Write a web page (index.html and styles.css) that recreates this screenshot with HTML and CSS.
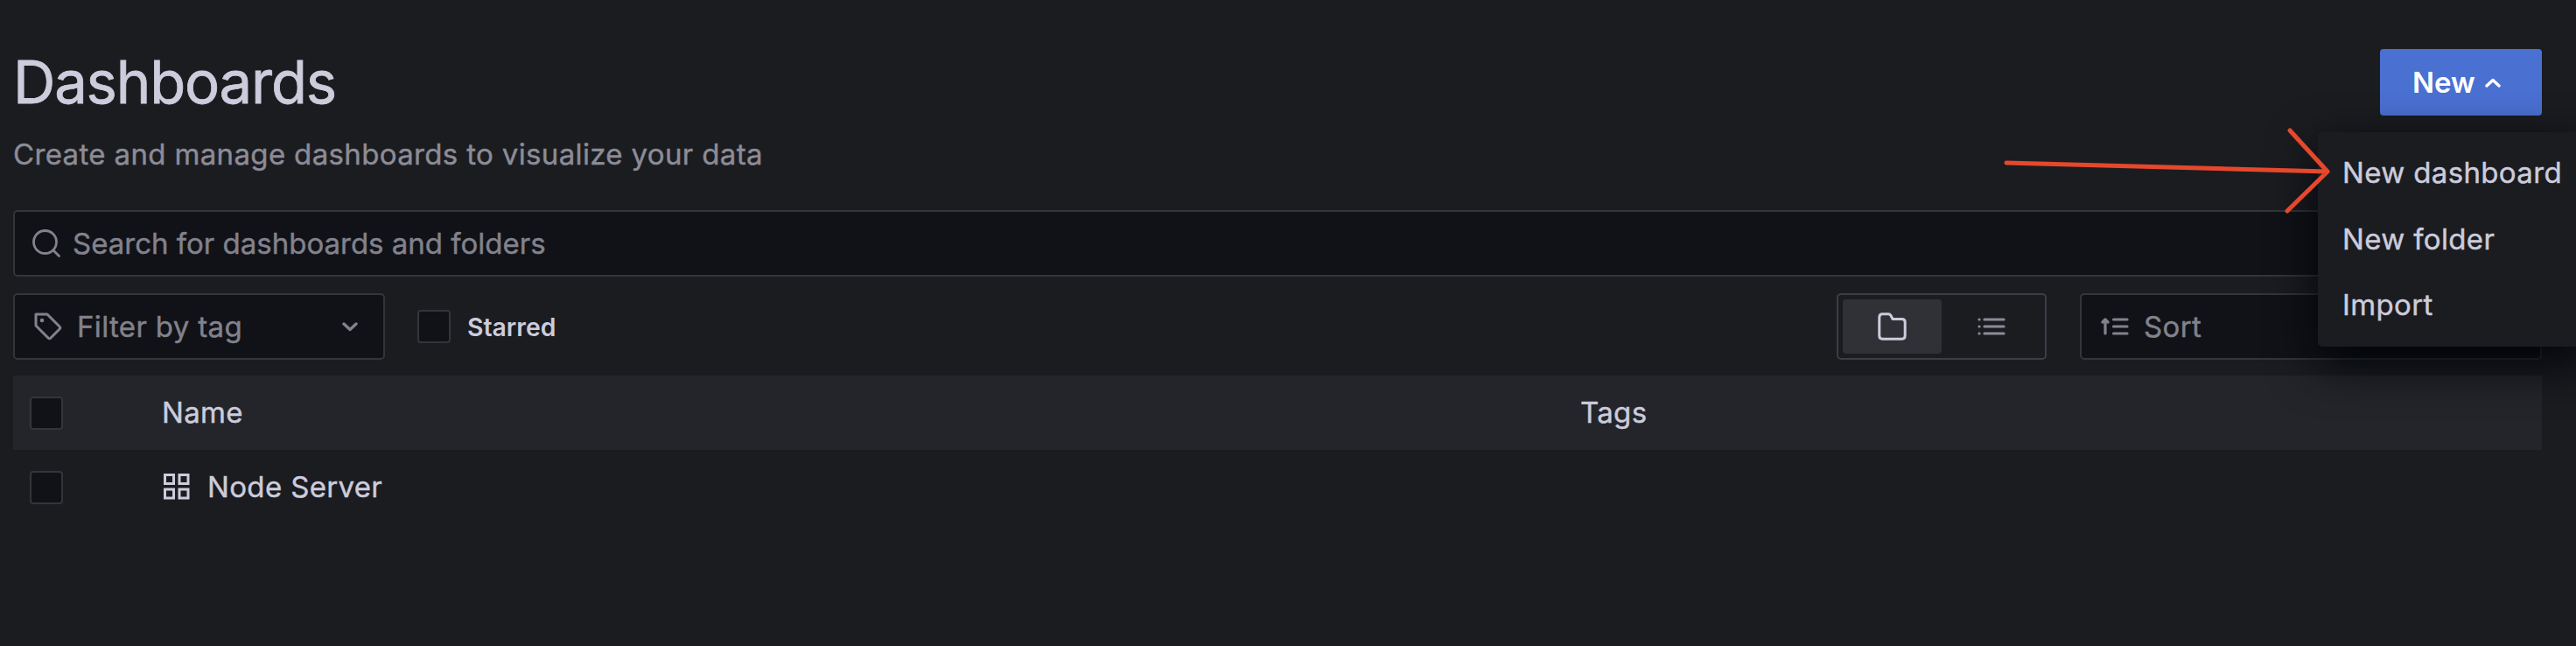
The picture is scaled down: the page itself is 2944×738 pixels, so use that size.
FILE: index.html
```html
<!DOCTYPE html>
<html lang="en">
<head>
<meta charset="utf-8">
<title>Dashboards</title>
<link rel="stylesheet" href="styles.css">
</head>
<body>
<main class="page">
  <header class="page-header">
    <div class="heading">
      <h1 class="title">Dashboards</h1>
      <p class="subtitle">Create and manage dashboards to visualize your data</p>
    </div>
    <button class="new-button"><span>New</span>
      <svg class="caret" viewBox="0 0 18 11"><path d="M2 9 L9 2.5 L16 9"/></svg>
    </button>
  </header>

  <div class="search field">
    <svg class="icon-search" viewBox="0 0 32 32"><circle cx="14.500" cy="14.500" r="13"/><path d="M24 24 L30.500 30.500"/></svg>
    <span class="placeholder">Search for dashboards and folders</span>
  </div>

  <div class="filters">
    <div class="tag-filter field">
      <svg class="icon-tag" viewBox="0 0 32 32"><path d="M2 2 H15 L29 16 Q30.5 17.500 29 19 L19 29 Q17.500 30.500 16 29 L2 15 Z"/><circle cx="9" cy="9" r="2.300"/></svg>
      <span class="placeholder">Filter by tag</span>
      <svg class="caret chevron" viewBox="0 0 18 11"><path d="M2 2 L9 8.500 L16 2"/></svg>
    </div>
    <label class="starred"><span class="checkbox"></span><span class="starred-text">Starred</span></label>
    <div class="view-toggle">
      <div class="toggle active">
        <svg class="icon-folder" viewBox="0 0 33 32"><path d="M5.500 1.800 H12 Q14 1.800 15 3.500 L17 7.500 H27.500 Q31.200 7.500 31.200 11 V26.500 Q31.200 30.200 27.500 30.200 H5.500 Q1.800 30.200 1.800 26.500 V5.500 Q1.800 1.800 5.500 1.800 Z"/></svg>
      </div>
      <div class="toggle">
        <svg class="icon-lines" viewBox="0 0 32 22"><path d="M8 3 H30 M8 11 H30 M8 19 H30 M2 3 h.01 M2 11 h.01 M2 19 h.01"/></svg>
      </div>
    </div>
    <div class="sort field">
      <svg class="icon-lines" viewBox="0 0 32 22"><path d="M14.500 3 H30 M14.500 11 H30 M14.500 19 H30 M5 19 V3 M2 6 L5 3 L8 6"/></svg>
      <span class="placeholder">Sort</span>
    </div>
  </div>

  <section class="table">
    <div class="row head"><span class="checkbox"></span><span class="name">Name</span><span class="tags">Tags</span></div>
    <div class="row"><span class="checkbox"></span>
      <span class="name"><svg class="icon-apps" viewBox="0 0 30 30"><path d="M1.500 1.500 H11.500 V11.500 H1.500 Z M18 1.500 H28 V11.500 H18 Z M1.500 18 H11.500 V28 H1.500 Z M18 18 H28 V28 H18 Z"/></svg>Node Server</span>
    </div>
  </section>
</main>

<nav class="menu">
  <a class="menu-item">New dashboard</a>
  <a class="menu-item">New folder</a>
  <a class="menu-item">Import</a>
</nav>
<svg class="arrow" viewBox="0 0 380 104"><path d="M7 42 L374 52 M331 5 L374 52 L328 97"/></svg>
</body>
</html>
```
FILE: styles.css
```css
* { box-sizing: border-box; }
body {
  margin: 0;
  height: 738px;
  overflow: hidden;
  position: relative;
  background: #1b1c20;
  color: #ccccdc;
  font: 400 33px/52px Inter, "Liberation Sans", sans-serif;
  letter-spacing: 0.350px;
  -webkit-text-stroke: 0.400px currentColor;
}
svg { display: block; flex: none; fill: none; stroke-linecap: round; stroke-linejoin: round; }
.page { padding: 56px 39px 0 15px; }
.page-header { display: flex; justify-content: space-between; align-items: flex-start; height: 184px; }
.title { margin: 0; font-size: 67px; font-weight: 400; line-height: 76px; letter-spacing: -1.200px; -webkit-text-stroke-width: 0.800px; }
.subtitle { margin: 18px 0 0; color: #8c8c97; }
.new-button {
  display: flex; align-items: center; gap: 11px;
  width: 185px; height: 76px; padding: 0 0 0 37px;
  border: 0; border-radius: 4px;
  background: #4a70d2; color: #fff;
  font: 600 33px/52px Inter, "Liberation Sans", sans-serif;
  -webkit-text-stroke-width: 0;
}
.caret { width: 18px; height: 11px; stroke: currentColor; stroke-width: 3.400; }
.field {
  display: flex; align-items: center; height: 76px;
  background: #111217; border: 2px solid #34353b; border-radius: 5px;
  color: #82828d;
}
.search { padding-left: 20px; letter-spacing: 0; }
.icon-search { width: 32px; height: 32px; margin-right: 14px; stroke: currentColor; stroke-width: 2.800; }
.filters { display: flex; align-items: center; margin-top: 19px; }
.tag-filter { width: 425px; padding: 0 29px 0 22px; }
.icon-tag { width: 32px; height: 32px; margin-right: 17px; stroke: currentColor; stroke-width: 3; }
.icon-tag circle { fill: currentColor; stroke: none; }
.placeholder { padding-bottom: 1px; }
.chevron { margin-left: auto; }
.starred { display: flex; align-items: center; gap: 19px; margin-left: 37px; }
.starred-text { padding-top: 1px; font-size: 28.300px; font-weight: 600; letter-spacing: 0; -webkit-text-stroke-width: 0; }
.checkbox { width: 38px; height: 38px; flex: none; background: #111217; border: 2px solid #34353b; border-radius: 4px; }
.view-toggle {
  display: flex; width: 240px; height: 76px; padding: 5px; margin: 0 38px 0 auto;
  border: 2px solid #3c3d45; border-radius: 5px; color: #8c8c97;
}
.toggle { flex: 1; display: flex; align-items: center; justify-content: center; border-radius: 4px; }
.active { background: #303136; color: #ccccdc; }
.icon-folder { width: 33px; height: 32px; stroke: currentColor; stroke-width: 3; }
.icon-lines { width: 32px; height: 22px; stroke: currentColor; stroke-width: 3.200; }
.sort { width: 528px; padding-left: 22px; }
.sort .icon-lines { margin-right: 17px; }
.table { margin-top: 18px; }
.row { display: grid; grid-template-columns: 151px 1621px 1fr; align-items: center; height: 85px; padding-left: 19px; }
.head { background: #24252a; }
.name { display: flex; align-items: center; }
.name, .tags { padding-bottom: 1px; }
.icon-apps { width: 30px; height: 30px; margin: 0 20px 0 2px; stroke: currentColor; stroke-width: 3; stroke-linejoin: miter; }
.menu {
  position: absolute; left: 2649px; top: 151px; width: 310px; height: 245px;
  padding: 8px 0 0 28px; background: #1b1c20; border-radius: 5px;
  box-shadow: 0 19px 56px #010409;
}
.menu-item { display: block; height: 75.500px; line-height: 77px; white-space: nowrap; }
.arrow { position: absolute; left: 2286px; top: 144px; width: 380px; height: 104px; stroke: #e5482c; stroke-width: 5; }
```
